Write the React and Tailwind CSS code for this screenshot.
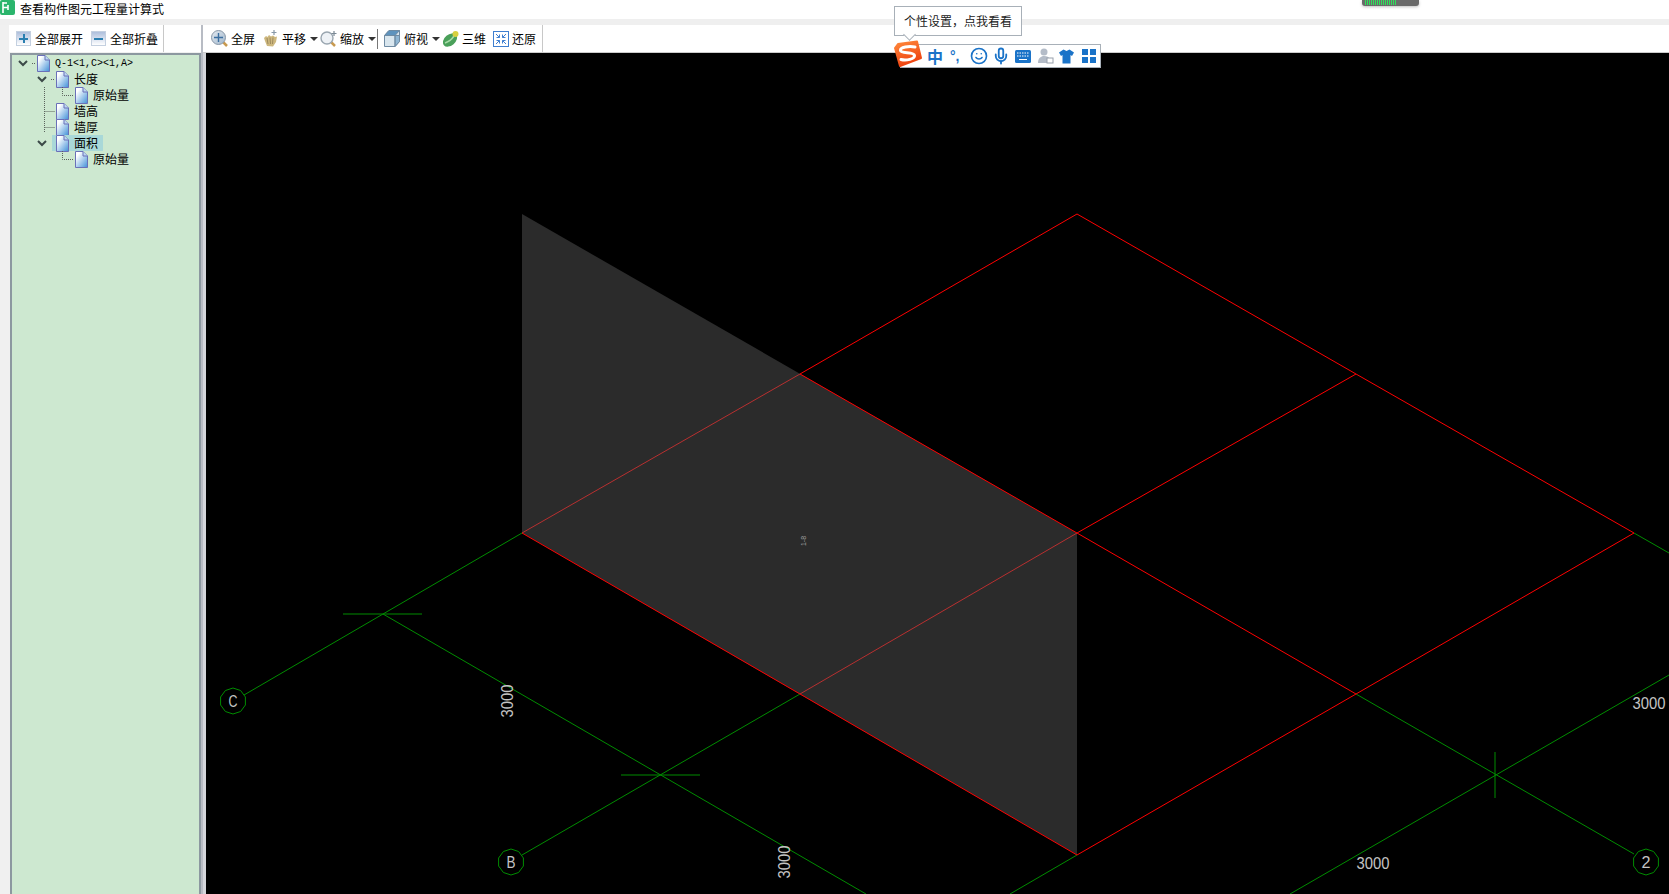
import React from 'react'
import { Smile, Mic } from 'lucide-react'

const CJK = { fontFamily: '"Noto Sans CJK SC", "Liberation Sans", sans-serif' }

const polygon = (cx, cy, r, sides = 12) =>
    Array.from({ length: sides }, (_, i) => {
        const a = (Math.PI * 2 * i) / sides + Math.PI / 2
        return `${(cx + r * Math.cos(a)).toFixed(1)},${(cy + r * Math.sin(a)).toFixed(1)}`
    }).join(' ')

const Doc = () => (
    <svg width="13" height="17" viewBox="0 0 13 17" className="shrink-0">
        <defs>
            <linearGradient id="docFill" x1="0" y1="0" x2="1" y2="1">
                <stop offset="0.2" stopColor="#ffffff" />
                <stop offset="1" stopColor="#3f8fd8" />
            </linearGradient>
        </defs>
        <path d="M0.5 0.5H8L12.5 5V16.5H0.5Z" fill="url(#docFill)" stroke="#6a70b8" />
        <path d="M8 0.5V5H12.5" fill="#bcd8f2" stroke="#6a70b8" />
    </svg>
)

const Chevron = ({ x }) => (
    <path d={`M${x - 4} 6L${x} 10L${x + 4} 6`} fill="none" stroke="#3c4a48" strokeWidth="2" />
)

const Dots = ({ d }) => <path d={d} fill="none" stroke="#5a625c" strokeDasharray="1 1" />

const treeRows = [
    { label: 'Q-1<1,C><1,A>', indent: 25, mono: true, draw: <><Chevron x={11} /><Dots d="M20 8.5H24" /></> },
    { label: '长度', indent: 44, draw: <><Chevron x={30} /><Dots d="M39 8.5H43" /></> },
    { label: '原始量', indent: 63, draw: <Dots d="M32.5 0V16M50.5 0V8.5H62" /> },
    { label: '墙高', indent: 44, draw: <Dots d="M32.5 0V16M32.5 8.5H43" /> },
    { label: '墙厚', indent: 44, draw: <Dots d="M32.5 0V14M32.5 8.5H43" /> },
    { label: '面积', indent: 40, selected: true, draw: <Chevron x={30} /> },
    { label: '原始量', indent: 63, draw: <Dots d="M50.5 0V8.5H62" /> },
]

const TreeRow = ({ row }) => (
    <div className="flex h-4 items-center">
        <svg width={row.indent} height="16" className="shrink-0">{row.draw}</svg>
        <div className={row.selected ? 'flex h-4 w-[51px] items-center bg-[#a9d8d8] pl-1' : 'flex h-4 items-center'}>
            <Doc />
            <span
                className={row.mono ? 'ml-[5px] text-[10px] text-black' : 'ml-[5px] text-[12px] text-black'}
                style={row.mono ? { fontFamily: '"Liberation Mono", monospace' } : CJK}
            >
                {row.label}
            </span>
        </div>
    </div>
)

const PlusMinus = ({ plus }) => (
    <div className="relative flex h-[15px] w-[15px] items-center justify-center border border-[#c4d0e0] bg-gradient-to-b from-[#aebfdc] to-[#ffffff]">
        <div className="h-[2px] w-[9px] bg-[#2a7fb0]" />
        {plus && <div className="absolute h-[9px] w-[2px] bg-[#2a7fb0]" />}
    </div>
)

const Label = ({ children, className = '' }) => (
    <span className={`text-[12px] leading-none whitespace-nowrap text-black ${className}`}>{children}</span>
)

const Caret = ({ className = '' }) => (
    <div className={`h-0 w-0 border-x-[4px] border-t-[4px] border-x-transparent border-t-[#333] ${className}`} />
)

const FullIcon = () => (
    <svg width="17" height="18" viewBox="0 0 17 18" className="ml-2">
        <defs>
            <linearGradient id="lens" x1="0" y1="0" x2="1" y2="1">
                <stop offset="0" stopColor="#e4eaf0" />
                <stop offset="1" stopColor="#9fb6cc" />
            </linearGradient>
        </defs>
        <path d="M12 12L16 16" stroke="#c89a50" strokeWidth="2.5" />
        <circle cx="7.5" cy="7.5" r="7" fill="url(#lens)" stroke="#8a98a8" />
        <path d="M7.5 3V12M3 7.5H12" stroke="#3a6ea0" strokeWidth="1.4" />
    </svg>
)

const PanIcon = () => (
    <svg width="15" height="17" viewBox="0 0 15 17" className="ml-2">
        <path d="M1 8L3 6L4.5 7L6 5L8 6.5L10 5.5L12 7L14 6.5L13 12L10 16.5L4 16L2 11Z" fill="#cdb77e" />
        <path d="M4 8L5 14M7 7.5L7.5 14M10 7.5L9.5 14" stroke="#907e54" strokeWidth="0.8" />
        <path d="M11 0V5M8.5 2.5H13.5" stroke="#8898a8" strokeWidth="1.2" />
    </svg>
)

const ZoomIcon = () => (
    <svg width="17" height="17" viewBox="0 0 17 17" className="ml-[2px]">
        <path d="M10 11L15 16" stroke="#c89a50" strokeWidth="2.5" />
        <circle cx="7" cy="8" r="6" fill="#eef2f6" stroke="#9aa6b0" strokeWidth="1.4" />
        <path d="M14 1V6M11.5 3.5H16.5" stroke="#7a8894" strokeWidth="1.2" />
    </svg>
)

const CubeIcon = () => (
    <svg width="16" height="17" viewBox="0 0 16 17" className="ml-[6px]">
        <path d="M0.5 5.5L5 0.5H15.5V11.5L11 16.5H0.5Z" fill="#d9e6ee" stroke="#6f8ba3" />
        <path d="M0.5 5.5L5 0.5H15.5L11 5.5Z" fill="#5e93bd" stroke="#6f8ba3" />
        <path d="M11 5.5H15.5V11.5L11 16.5Z" fill="#8fb6d3" stroke="#6f8ba3" />
        <path d="M11 5.5V16.5" stroke="#6f8ba3" />
    </svg>
)

const ThreeDIcon = () => (
    <svg width="16" height="17" viewBox="0 0 16 17" className="ml-[3px]">
        <ellipse cx="7" cy="10" rx="8" ry="5.5" fill="#4aa05a" transform="rotate(-40 7 10)" />
        <path d="M2 13C5 12 9 9 11 6" stroke="#a8dca8" strokeWidth="1.5" fill="none" />
        <circle cx="12.5" cy="4" r="3" fill="#d8d040" />
    </svg>
)

const RestoreIcon = () => (
    <svg width="16" height="16" viewBox="0 0 16 16" className="ml-[7px]">
        <rect x="0.5" y="0.5" width="15" height="15" fill="#ffffff" stroke="#3f7fd0" />
        <path d="M3 3L6.5 6.5M6.5 3.5V6.5H3.5M13 3L9.5 6.5M9.5 3.5V6.5H12.5M3 13L6.5 9.5M6.5 12.5V9.5H3.5M13 13L9.5 9.5M9.5 12.5V9.5H12.5" stroke="#3f7fd0" fill="none" />
    </svg>
)

const RED = '#ff0000'
const GREEN = '#008c00'
const redLines = [
    'M800 374L1077 214L1356 374L1634 533L1356 694L1077 855L800 694L522 533',
    'M800 374L1077 533L1356 694',
    'M1356 374L1077 533',
]
// these two run across the grey wall, they read dimmer in the reference
const dimRedLines = ['M522 533L800 374', 'M1077 533L800 694']
const greenLines = [
    'M244 695L522 533',
    'M383 614L866 894',
    'M522 855L800 694',
    'M1077 855L1010 894',
    'M1356 694L1634 854',
    'M1669 675L1290 894',
    'M1634 533L1669 553',
    'M343 614H422',
    'M621 775H700',
    'M1495 752V798',
]

const DimText = ({ x, y, rotate, children }) => (
    <text
        x={x}
        y={y}
        transform={rotate ? `rotate(-90 ${x} ${y})` : undefined}
        textAnchor="middle"
        dominantBaseline="central"
        fontSize="17"
        textLength="33"
        lengthAdjust="spacingAndGlyphs"
        fill="#c4c4c4"
        style={{ fontFamily: '"Liberation Sans", sans-serif' }}
    >
        {children}
    </text>
)

const Bubble = ({ x, y, label }) => (
    <g>
        <polygon points={polygon(x, y, 13, 10)} fill="none" stroke={GREEN} />
        <text
            x={x}
            y={y}
            textAnchor="middle"
            dominantBaseline="central"
            fontSize="16"
            textLength="9"
            lengthAdjust="spacingAndGlyphs"
            fill="#c4c4c4"
            style={{ fontFamily: '"Liberation Sans", sans-serif' }}
        >
            {label}
        </text>
    </g>
)

const Canvas = () => (
    <svg viewBox="206 53 1463 841" width="1463" height="841" className="block shrink-0 bg-black">
        <polygon points="522,214 1077,533 1077,855 522,533" fill="#2b2b2b" />
        {greenLines.map((d) => <path key={d} d={d} fill="none" stroke={GREEN} />)}
        {dimRedLines.map((d) => <path key={d} d={d} fill="none" stroke="#b83030" />)}
        {redLines.map((d) => <path key={d} d={d} fill="none" stroke={RED} />)}
        <Bubble x={233} y={701} label="C" />
        <Bubble x={511} y={862} label="B" />
        <Bubble x={1646} y={862} label="2" />
        <DimText x={507} y={701} rotate>3000</DimText>
        <DimText x={784} y={862} rotate>3000</DimText>
        <DimText x={1373} y={863}>3000</DimText>
        <DimText x={1649} y={703}>3000</DimText>
        <text
            x={803}
            y={541}
            transform="rotate(-90 803 541)"
            textAnchor="middle"
            dominantBaseline="central"
            fontSize="7"
            fill="#a0a0a0"
            style={{ fontFamily: '"Liberation Sans", sans-serif' }}
        >
            1-8
        </text>
    </svg>
)

const SogouBar = () => (
    <div className="absolute top-[44px] left-[900px] flex h-[24px] w-[201px] items-center border border-[#a8b0b8] bg-white pl-[26px] text-[#1a73c8]">
        <span className="w-[16px] text-[16px] leading-none font-bold" style={CJK}>中</span>
        <span className="ml-[7px] w-[14px] text-[14px] leading-none font-bold" style={{ fontFamily: '"Liberation Sans", sans-serif' }}>°,</span>
        <Smile size={18} strokeWidth={2.2} className="ml-[6px]" />
        <Mic size={18} strokeWidth={2.4} className="ml-[4px]" />
        <svg width="16" height="13" viewBox="0 0 16 13" className="ml-[5px]">
            <rect width="16" height="13" rx="1.5" fill="#1a73c8" />
            <path d="M2 3H14M2 6H14" stroke="#ffffff" strokeDasharray="1.5 1" />
            <path d="M4 9.5H12" stroke="#ffffff" />
        </svg>
        <svg width="16" height="16" viewBox="0 0 16 16" className="ml-[7px]">
            <circle cx="6" cy="4" r="3.5" fill="#b4bcc8" />
            <path d="M0 15C0 10 3 8 6 8C9 8 11 9 12 11V15Z" fill="#b4bcc8" />
            <rect x="9" y="10" width="6" height="5" fill="#ffffff" stroke="#98a0ac" />
        </svg>
        <svg width="15" height="15" viewBox="0 0 15 15" className="ml-[5px]">
            <path d="M4.5 0.5L7.5 2L10.5 0.5L15 3.5L13 7L11.5 6V14.5H3.5V6L2 7L0 3.5Z" fill="#1a73c8" />
        </svg>
        <div className="ml-[8px] grid h-[14px] w-[14px] grid-cols-2 gap-[2px]">
            <div className="bg-[#1a73c8]" />
            <div className="bg-[#1a73c8]" />
            <div className="bg-[#1a73c8]" />
            <div className="bg-[#1a73c8]" />
        </div>
    </div>
)

const App = () => {
    return (
        <div className="relative flex h-[894px] w-[1669px] flex-col overflow-hidden bg-white" style={CJK}>
            {/* title bar */}
            <div className="flex h-[19px] shrink-0 items-start">
                <svg width="15" height="15" viewBox="0 0 15 15" className="shrink-0">
                    <rect width="15" height="15" rx="2" fill="#2bb56c" />
                    <path d="M3 2V13M3 7.5H8M8 5V10M3 3H7" stroke="#ffffff" strokeWidth="1.6" fill="none" />
                </svg>
                <span className="ml-[5px] text-[12px] leading-[17px] text-black">查看构件图元工程量计算式</span>
            </div>
            <div className="h-[6px] shrink-0 bg-[#efefef]" />

            <div className="flex min-h-0 flex-1">
                {/* left panel */}
                <div className="flex w-[201px] shrink-0 flex-col bg-[#f0f0f0] pl-[9px]">
                    <div className="flex h-[27px] shrink-0 items-center bg-white pl-[7px]">
                        <PlusMinus plus />
                        <Label className="ml-1">全部展开</Label>
                        <div className="ml-2"><PlusMinus /></div>
                        <Label className="ml-1">全部折叠</Label>
                        <div className="ml-[5px] h-full w-px bg-[#c8c8c8]" />
                    </div>
                    <div className="mt-px ml-px flex-1 border-2 border-b-0 border-[#8c98a0] bg-[#cde8d0]">
                        {treeRows.map((row, i) => <TreeRow key={i} row={row} />)}
                    </div>
                </div>

                {/* right side */}
                <div className="flex min-w-0 flex-1 flex-col border-l-2 border-[#b8bcc4]">
                    <div className="flex h-[28px] shrink-0 items-center border-b border-[#cccccc] bg-white">
                        <FullIcon />
                        <Label className="ml-[3px]">全屏</Label>
                        <PanIcon />
                        <Label className="ml-1">平移</Label>
                        <Caret className="ml-1" />
                        <ZoomIcon />
                        <Label className="ml-[3px]">缩放</Label>
                        <Caret className="ml-1" />
                        <div className="ml-[1px] h-[20px] w-px bg-[#777777]" />
                        <CubeIcon />
                        <Label className="ml-1">俯视</Label>
                        <Caret className="ml-1" />
                        <ThreeDIcon />
                        <Label className="ml-[3px]">三维</Label>
                        <RestoreIcon />
                        <Label className="ml-[3px]">还原</Label>
                        <div className="ml-[6px] h-full w-px bg-[#c8c8c8]" />
                    </div>
                    <div className="flex min-h-0 flex-1 bg-[#d4d6da] pl-[3px]">
                        <Canvas />
                    </div>
                </div>
            </div>

            {/* battery style indicator at the screen top */}
            <div className="absolute top-0 left-[1362px] flex h-[6px] w-[57px] items-start gap-px rounded-b-[3px] bg-[#6a6a6a] pl-[3px] shadow-[0_1px_3px_rgba(0,0,0,0.25)]">
                {Array.from({ length: 16 }, (_, i) => <div key={i} className="h-[5px] w-px bg-[#2fe05a]" />)}
            </div>

            {/* input method tooltip */}
            <div className="absolute top-[6px] left-[894px] flex h-[30px] w-[128px] items-center justify-center border border-[#a8b0b8] bg-white text-[12px] text-[#222222]">
                个性设置，点我看看
                <div className="absolute top-[23px] left-[10px] h-[9px] w-[9px] rotate-45 border-r border-b border-[#a8b0b8] bg-white" />
            </div>

            <SogouBar />

            {/* sogou logo */}
            <svg width="30" height="28" viewBox="0 0 30 28" className="absolute top-[40px] left-[893px]">
                <defs>
                    <linearGradient id="sogou" x1="0" y1="0" x2="0.4" y2="1">
                        <stop offset="0" stopColor="#ff8a3c" />
                        <stop offset="1" stopColor="#ee4210" />
                    </linearGradient>
                </defs>
                <polygon points="5,4 24,1.5 28,18 7,26 2,8" fill="url(#sogou)" stroke="url(#sogou)" strokeWidth="2" strokeLinejoin="round" />
                <path d="M22 7C16 6 7 7 7.5 10.5C8 14 21 11.5 21.5 15.5C22 19 13 21 8 19.5" fill="none" stroke="#ffffff" strokeWidth="3" strokeLinecap="round" />
            </svg>
        </div>
    )
}

export default App
